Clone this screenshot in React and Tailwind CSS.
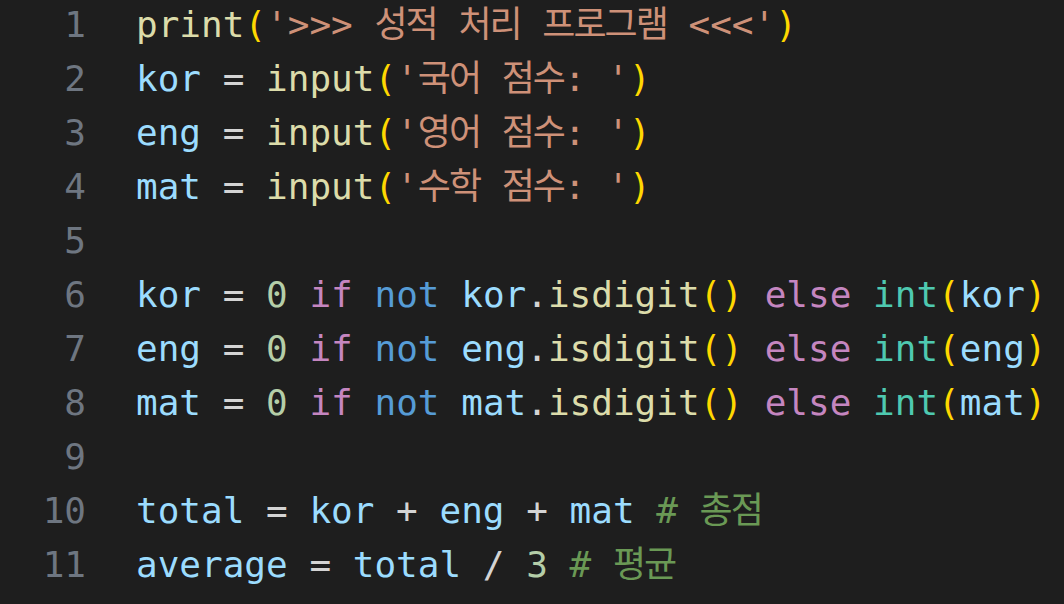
import React from "react";

const C = {
  id: "text-[#9cdcfe]",
  fn: "text-[#dcdcaa]",
  str: "text-[#ce9178]",
  br: "text-[#ffd700]",
  num: "text-[#b5cea8]",
  kw: "text-[#c586c0]",
  not: "text-[#569cd6]",
  cls: "text-[#4ec9b0]",
  cm: "text-[#6a9955]",
  op: "text-[#d4d4d4]",
};

// hangul glyphs are narrower in the original editor font
function K({ children }) {
  return <span className="tracking-[-2px]">{children}</span>;
}

const lines = [
  [
    ["fn", "print"], ["br", "("], ["str", "'>>> "], ["strk", "성적"], ["str", " "], ["strk", "처리"], ["str", " "], ["strk", "프로그램"], ["str", " <<<'"], ["br", ")"],
  ],
  [["id", "kor"], ["op", " = "], ["fn", "input"], ["br", "("], ["str", "'"], ["strk", "국어"], ["str", " "], ["strk", "점수"], ["str", ": '"], ["br", ")"]],
  [["id", "eng"], ["op", " = "], ["fn", "input"], ["br", "("], ["str", "'"], ["strk", "영어"], ["str", " "], ["strk", "점수"], ["str", ": '"], ["br", ")"]],
  [["id", "mat"], ["op", " = "], ["fn", "input"], ["br", "("], ["str", "'"], ["strk", "수학"], ["str", " "], ["strk", "점수"], ["str", ": '"], ["br", ")"]],
  [],
  ...["kor", "eng", "mat"].map((v) => [
    ["id", v], ["op", " = "], ["num", "0"], ["op", " "], ["kw", "if"], ["op", " "], ["not", "not"], ["op", " "],
    ["id", v], ["op", "."], ["fn", "isdigit"], ["br", "()"], ["op", " "], ["kw", "else"], ["op", " "],
    ["cls", "int"], ["br", "("], ["id", v], ["br", ")"],
  ]),
  [],
  [
    ["id", "total"], ["op", " = "], ["id", "kor"], ["op", " + "], ["id", "eng"], ["op", " + "], ["id", "mat"], ["op", " "], ["cm", "# "], ["cmk", "총점"],
  ],
  [["id", "average"], ["op", " = "], ["id", "total"], ["op", " / "], ["num", "3"], ["op", " "], ["cm", "# "], ["cmk", "평균"]],
];

export default function App() {
  return (
    <div className="w-[1064px] h-[604px] bg-[#1e1e1e] overflow-hidden">
      <div
        className="-mt-[2px] text-[36px] leading-[54px] whitespace-pre"
        style={{ fontFamily: '"DejaVu Sans Mono", "Noto Sans CJK KR", monospace' }}
      >
        {lines.map((toks, i) => (
          <div key={i} className="flex h-[54px]">
            <div className="w-[86px] text-right text-[#6e7681]">{i + 1}</div>
            <div className="ml-[50px]">
              {toks.map(([t, s], j) => {
                if (t === "strk") return <span key={j} className={C.str}><K>{s}</K></span>;
                if (t === "cmk") return <span key={j} className={C.cm}><K>{s}</K></span>;
                return <span key={j} className={C[t]}>{s}</span>;
              })}
            </div>
          </div>
        ))}
      </div>
    </div>
  );
}
